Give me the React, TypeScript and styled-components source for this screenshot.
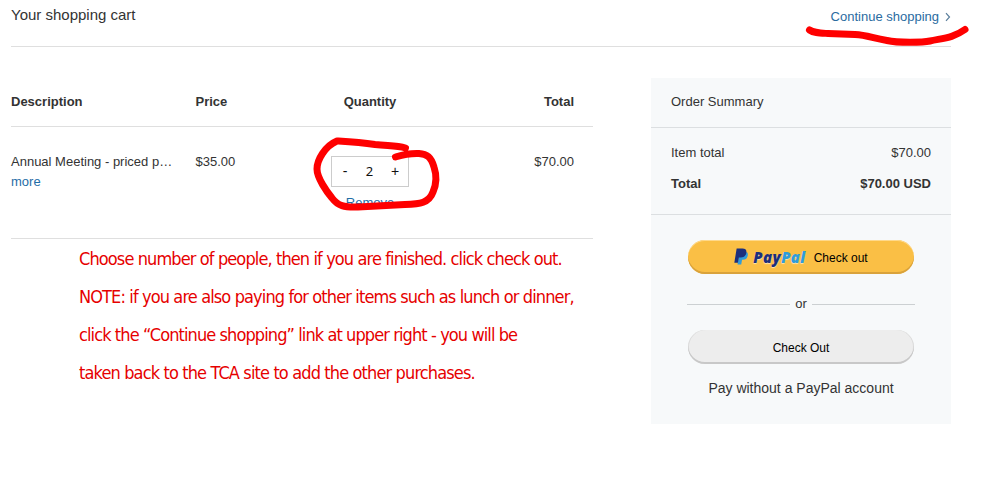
import React from "react";
import styled, { createGlobalStyle } from "styled-components";

const GlobalStyle = createGlobalStyle`
  *, *::before, *::after { box-sizing: border-box; }
  body {
    margin: 0;
    background: #fff;
    color: #333;
    font-family: "Liberation Sans", Arial, sans-serif;
    font-size: 13px;
    line-height: 20px;
  }
  #root { overflow: hidden; height: 496px; }
`;

const Page = styled.div`
  position: relative;
  width: 982px;
  height: 496px;
  padding: 0 31px 0 11px;
`;

const Header = styled.header`
  display: flex;
  justify-content: space-between;
  height: 47px;
  border-bottom: 1px solid #dfdfdf;
`;

const Title = styled.h1`
  margin: 5px 0 0;
  font-size: 15px;
  font-weight: 400;
  line-height: 20px;
`;

const ContinueLink = styled.a`
  display: flex;
  gap: 6px;
  height: 20px;
  margin-top: 7px;
  color: #2a6b9f;
  text-decoration: none;

  svg { margin-top: 5px; }
`;

const Columns = styled.main`
  display: grid;
  grid-template-columns: 582px 300px;
  justify-content: space-between;
  margin-top: 31px;
`;

const CartRow = styled.div<{ $head?: boolean }>`
  display: grid;
  grid-template-columns: 184.5px 127.5px 94px 1fr;
  height: ${(p) => (p.$head ? 49 : 112)}px;
  padding: ${(p) => (p.$head ? 14 : 25)}px 19px 0 0;
  border-bottom: 1px solid #dfdfdf;
  font-weight: ${(p) => (p.$head ? 700 : 400)};
`;

const Cell = styled.div<{ $align?: "center" | "right" }>`
  text-align: ${(p) => p.$align || "left"};
`;

const QuantityCell = styled.div`
  display: flex;
  flex-direction: column;
  align-items: center;
  padding-top: 4px;
`;

const Stepper = styled.div`
  display: flex;
  width: 78px;
  height: 31px;
  border: 1px solid #ccc;
  line-height: 29px;
  color: #111;
`;

const StepButton = styled.button`
  width: 26px;
  padding: 0;
  border: 0;
  background: none;
  color: inherit;
  font: inherit;
  font-size: 14px;
`;

const StepValue = styled.span`
  flex: 1;
  padding-right: 1px;
  text-align: center;
  font-family: "Noto Sans", sans-serif;
  font-size: 13px;
`;

const TextLink = styled.a`
  color: #1f6da6;
  text-decoration: none;
`;

const RemoveLink = styled(TextLink)`
  margin-top: 6px;
`;

const Note = styled.div`
  padding: 1px 0 0 68px;
  color: #e60000;
  font-family: "DejaVu Sans Condensed", "DejaVu Sans", Tahoma, sans-serif;
  font-stretch: condensed;
  font-size: 18px;
  line-height: 38px;
  white-space: nowrap;
`;

const NoteLine = styled.div<{ $tracking: number }>`
  letter-spacing: ${(p) => p.$tracking}px;
`;

const Summary = styled.aside`
  height: 346px;
  background: #f7f9fa;
`;

const SummaryHeading = styled.div`
  height: 50px;
  padding: 14px 20px 0;
  border-bottom: 1px solid #dcdfe1;
`;

const Totals = styled.div`
  display: grid;
  gap: 11px;
  height: 87px;
  padding: 15px 20px 0;
  align-content: start;
  border-bottom: 1px solid #dcdfe1;
`;

const TotalLine = styled.div<{ $strong?: boolean }>`
  display: flex;
  justify-content: space-between;
  font-weight: ${(p) => (p.$strong ? 700 : 400)};
`;

const Payment = styled.div`
  display: flex;
  flex-direction: column;
  align-items: center;
  padding-top: 25px;
`;

const PillButton = styled.button<{ $gold?: boolean }>`
  display: flex;
  align-items: center;
  justify-content: center;
  width: 226px;
  height: 34px;
  padding: 2px 0 0;
  border: 0;
  border-radius: 17px;
  background: ${(p) => (p.$gold ? "#fabf45" : "#ededed")};
  box-shadow: ${(p) =>
    p.$gold
      ? "inset 0 -2px 0 #d9a23b, inset 0 1px 0 #ffd98b"
      : "inset 0 -2px 0 #c8c8c8, inset 1px 0 0 #dcdcdc, inset -1px 0 0 #dcdcdc"};
  color: #000;
  font: 12px/20px "Liberation Sans", Arial, sans-serif;
`;

const PayPalMark = styled.svg`
  margin: -3px 5px 0 0;
`;

const Wordmark = styled.span`
  margin: -2px 8px 0 0;
  color: #1c2f7c;
  font: italic 800 15px/20px "Open Sans", sans-serif;
  letter-spacing: 0.4px;
  text-shadow: 0 1px 1px rgba(255, 255, 255, 0.6);

  span { color: #2f9cdb; }
`;

const Divider = styled.div`
  display: flex;
  align-items: center;
  gap: 5px;
  width: 228px;
  height: 20px;
  margin: 20px 0 16px;

  &::before, &::after {
    content: "";
    flex: 1;
    height: 1px;
    background: #ccd0d2;
  }
`;

const GuestText = styled.div`
  margin-top: 14px;
  font-size: 14px;
`;

const Ink = styled.svg`
  position: absolute;
  inset: 0;
  pointer-events: none;
  fill: none;
  stroke: #fe0000;
  stroke-width: 7;
  stroke-linecap: round;
  stroke-linejoin: round;
`;

const noteLines = [
  { text: "Choose number of people, then if you are finished. click check out.", tracking: -0.89 },
  { text: "NOTE: if you are also paying for other items such as lunch or dinner,", tracking: -0.88 },
  { text: "click the “Continue shopping” link at upper right - you will be", tracking: -0.91 },
  { text: "taken back to the TCA site to add the other purchases.", tracking: -0.87 },
];

export default function App() {
  return (
    <>
      <GlobalStyle />
      <Page>
        <Header>
          <Title>Your shopping cart</Title>
          <ContinueLink>
            Continue shopping
            <svg width="6" height="10" viewBox="0 0 6 10" fill="none" stroke="#5b7f9c" strokeWidth="1.2">
              <path d="M1 1.200 4.500 5 1 8.800" />
            </svg>
          </ContinueLink>
        </Header>
        <Columns>
          <section>
            <CartRow $head>
              <Cell>Description</Cell>
              <Cell>Price</Cell>
              <Cell $align="center">Quantity</Cell>
              <Cell $align="right">Total</Cell>
            </CartRow>
            <CartRow>
              <Cell>
                Annual Meeting - priced p…
                <br />
                <TextLink>more</TextLink>
              </Cell>
              <Cell>$35.00</Cell>
              <QuantityCell>
                <Stepper>
                  <StepButton>-</StepButton>
                  <StepValue>2</StepValue>
                  <StepButton>+</StepButton>
                </Stepper>
                <RemoveLink>Remove</RemoveLink>
              </QuantityCell>
              <Cell $align="right">$70.00</Cell>
            </CartRow>
            <Note>
              {noteLines.map((line) => (
                <NoteLine key={line.text} $tracking={line.tracking}>
                  {line.text}
                </NoteLine>
              ))}
            </Note>
          </section>
          <Summary>
            <SummaryHeading>Order Summary</SummaryHeading>
            <Totals>
              <TotalLine>
                <span>Item total</span>
                <span>$70.00</span>
              </TotalLine>
              <TotalLine $strong>
                <span>Total</span>
                <span>$70.00 USD</span>
              </TotalLine>
            </Totals>
            <Payment>
              <PillButton $gold>
                <PayPalMark width="14" height="17" viewBox="0 0 13 16">
                  <path fill="#2f9cdb" d="M5 4h7.200c1 .8.9 2.300.5 3.700C12 10.300 10.500 11 8.300 11h-.8L6.700 15.600H3.200z" />
                  <path fill="#1c2f7c" d="M2.400.5h5.400c3 0 4.200 1.500 3.700 4.100-.6 3.100-2.500 4.400-5.400 4.400H4.500L3.600 13.900H.2z" />
                </PayPalMark>
                <Wordmark>
                  Pay<span>Pal</span>
                </Wordmark>
                Check out
              </PillButton>
              <Divider>or</Divider>
              <PillButton>Check Out</PillButton>
              <GuestText>Pay without a PayPal account</GuestText>
            </Payment>
          </Summary>
        </Columns>
        <Ink width="982" height="496" viewBox="0 0 982 496">
          <path d="M809.500 30C814 33 819 33 828 33.500L855 34.500C867 35 872 38 887 40.500C898 43 923 42.500 930 41C944 38 953 38 965 29.500" />
          <path d="M405.500 148C397 145.500 390 146 375 144.500C360 142.500 352 142 337 141C325 146 317 160 317 169C317 178 327 192 332 198C338 206 344 207.500 358 207L405 204.500C420 204 429 203 433 192C437 183 437 176 434 167C431 157 427 154 419 153.500C408 153 402 155 395.500 157" />
        </Ink>
      </Page>
    </>
  );
}
